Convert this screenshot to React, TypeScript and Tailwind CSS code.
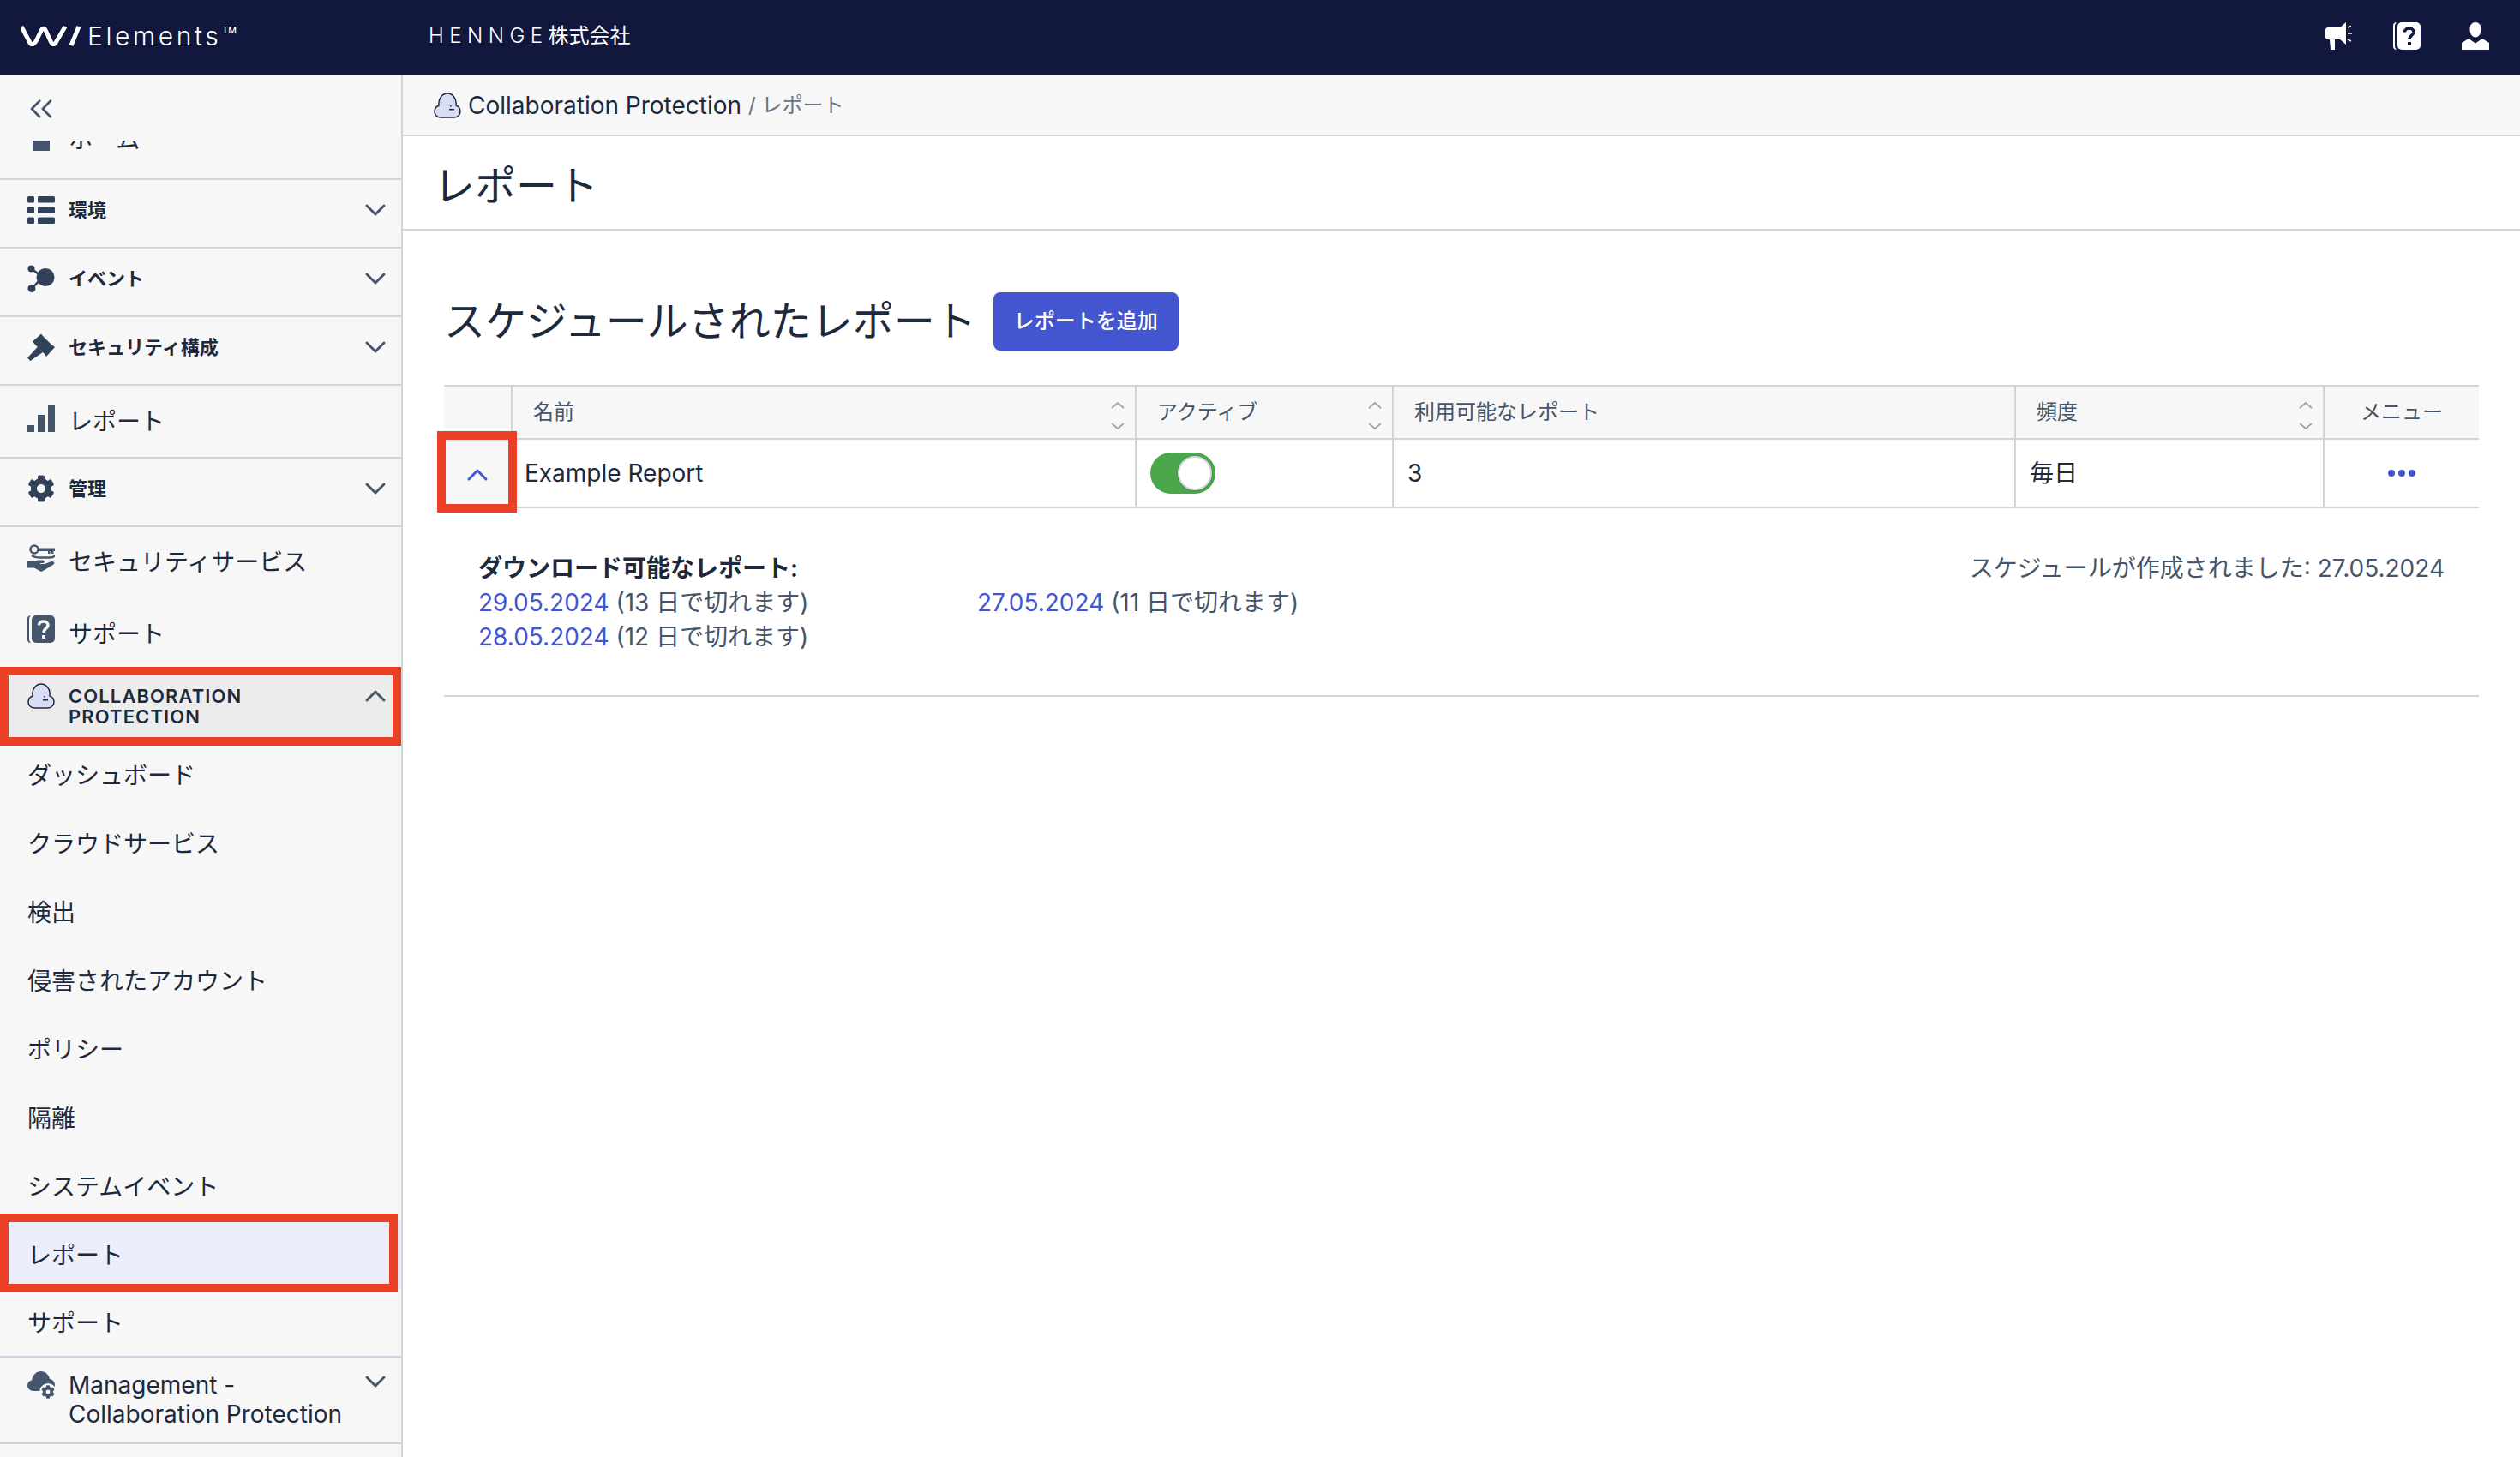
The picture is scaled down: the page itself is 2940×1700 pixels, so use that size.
import { ChevronDown, ChevronUp, ChevronsLeft } from "lucide-react";
import { FC, ReactNode } from "react";
import { FaCog } from "react-icons/fa";

const ListIcon: FC = () => (
  <svg viewBox="0 0 32 32" className="w-8 h-8 shrink-0 fill-current">
    <rect x="0" y="0" width="8" height="7.5" rx="1.5" />
    <rect x="12" y="0" width="20" height="7.5" rx="1.5" />
    <rect x="0" y="12" width="8" height="8" rx="1.5" />
    <rect x="12" y="12" width="20" height="8" rx="1.5" />
    <rect x="0" y="24.5" width="8" height="7.5" rx="1.5" />
    <rect x="12" y="24.5" width="20" height="7.5" rx="1.5" />
  </svg>
);

const EventIcon: FC = () => (
  <svg viewBox="0 0 32 32" className="w-8 h-8 shrink-0 fill-current">
    <circle cx="21" cy="14.5" r="10.5" />
    <circle cx="4.5" cy="4.5" r="4" />
    <circle cx="5" cy="27.5" r="4.5" />
    <path d="M4.5 4.5 L18 14.5 L5 27.5" fill="none" stroke="currentColor" strokeWidth="2.5" />
  </svg>
);

const GavelIcon: FC = () => (
  <svg viewBox="0 0 32 32" className="w-8 h-8 shrink-0 fill-current">
    <path d="M16 0.5 L18 3 L28 13 L32 16 L22 27 L19.5 23.5 L9 13 L6 9.5 Z" />
    <path d="M12 15.5 L18 22 L3.5 32 L0 28.5 Z" />
  </svg>
);

const BarsIcon: FC = () => (
  <svg viewBox="0 0 32 32" className="w-8 h-8 shrink-0 mb-2 fill-current">
    <rect x="0" y="24" width="8" height="8" />
    <rect x="12" y="12" width="8" height="20" />
    <rect x="24" y="0" width="8" height="32" />
  </svg>
);

const KeyHandIcon: FC = () => (
  <svg viewBox="0 0 32 32" className="w-8 h-8 shrink-0 mb-2 fill-current">
    <circle cx="8" cy="6" r="4.5" fill="none" stroke="currentColor" strokeWidth="2.5" />
    <path d="M12 4.5 H32 V8 H30.5 V11 H28 V8 H26.5 V11 H24 V8 H12 Z" />
    <path d="M5 13 C9 16 13 15.5 17 15.5 H26 C29 15.5 31 15 32 13" fill="none" stroke="currentColor" strokeWidth="2.5" />
    <path d="M0 20 H7 L12 18.5 H18 C20.5 18.5 20.5 22 18 22 H15 V23 H20 L28 20 C31 19.5 32.5 22 30.5 23.5 L20 30 L16 32 L8 27.5 H0 Z" />
  </svg>
);

const HelpIcon: FC<{ cut: string; className?: string }> = ({ cut, className = "mb-2" }) => (
  <svg viewBox="0 0 32 32" className={`w-8 h-8 shrink-0 fill-current ${className}`}>
    <path d="M4 0 C1 0 0 2 0 4 V28 C0 30 1 32 4 32 C2.5 31 2 29 2 27 V5 C2 3 2.5 1 4 0 Z" />
    <rect x="5" y="0" width="27" height="32" rx="5" />
    <path d="M13.5 11.5 C13.5 5.5 24 5.5 24 11.5 C24 15.5 19 15 19 20" fill="none" stroke={cut} strokeWidth="3.5" />
    <rect x="17" y="23" width="4" height="4" fill={cut} />
  </svg>
);

const CloudFaceIcon: FC = () => (
  <svg viewBox="0 0 32 30" className="w-8 h-8 shrink-0">
    <path
      d="M8 29 C3 29 1 25 1 22 C1 18 3.5 16 6 15 C5 7 10 1 16 1 C22 1 27 7 26 15 C28.5 16 31 18 31 22 C31 25 28.5 29 24 29 Z"
      fill="#d9dcf5"
      stroke="#1e293b"
      strokeWidth="1.5"
    />
    <rect x="19" y="15" width="1.5" height="1.5" fill="#1e293b" />
    <rect x="18" y="19" width="6" height="1.5" fill="#1e293b" />
  </svg>
);

const ManagementIcon: FC = () => (
  <div className="relative w-8 h-8 shrink-0">
    <svg viewBox="0 0 32 32" className="w-8 h-8 fill-current">
      <path d="M7 23 C3 23 0 20 0 16.5 C0 13.5 2 11 5 10.5 C6 5 10 0 16 0 C21 0 25 4 26 9 C29.5 9.5 32 12.5 32 16 C32 20 29 23 25 23 Z" />
    </svg>
    <div className="absolute -right-0.5 -bottom-0.5 p-0.5 rounded-full bg-[#f7f7f7]">
      <FaCog className="w-4 h-4" />
    </div>
  </div>
);

const MegaphoneIcon: FC = () => (
  <svg viewBox="0 0 32 32" className="w-8 h-8 fill-current">
    <path d="M4 6 H18 L25 0 V26 L18 20 H12 V32 H7 L6 20 H4 C1.5 20 0 17 0 13 C0 9 1.5 6 4 6 Z" />
    <path d="M27 6 L31 4.5 M27 13 H32 M27 20 L31 22" fill="none" stroke="currentColor" strokeWidth="1.5" />
  </svg>
);

const UserIcon: FC = () => (
  <svg viewBox="0 0 32 32" className="w-8 h-8 fill-current">
    <path d="M16 0 C20 0 22.5 3 22.5 8 C22.5 13 20 17.5 16 17.5 C12 17.5 9.5 13 9.5 8 C9.5 3 12 0 16 0 Z" />
    <path d="M0 24 L8 19 L16 24.5 L24 19 L32 24 V32 H0 Z" />
  </svg>
);

const SortIcon: FC = () => (
  <svg viewBox="0 0 16 32" className="w-4 h-8 mt-2 shrink-0 fill-none stroke-gray-400" strokeWidth="1.75">
    <path d="M1 7 L8 1 L15 7" />
    <path d="M1 25 L8 31 L15 25" />
  </svg>
);

const Section: FC<{ icon: ReactNode; label: string }> = ({ icon, label }) => (
  <div className="flex items-center h-20 pb-2 pl-8 pr-2.5 gap-4 border-b-2 border-zinc-300">
    <div className="text-slate-700">{icon}</div>
    <span className="text-[22px] font-semibold">{label}</span>
    <ChevronDown className="w-10 h-10 ml-auto text-slate-600" strokeWidth={1.75} />
  </div>
);

const subItems = ["ダッシュボード", "クラウドサービス", "検出", "侵害されたアカウント", "ポリシー", "隔離", "システムイベント"];

const Sidebar: FC = () => (
  <aside className="w-[470px] shrink-0 flex flex-col bg-[#f7f7f7] border-r-2 border-zinc-300 text-slate-800 text-[28px]">
    <div className="h-19 flex items-center pt-0.5 pl-6.5 text-slate-600">
      <ChevronsLeft className="w-11 h-11" strokeWidth={1.5} />
    </div>
    <div className="h-11 flex flex-col justify-end overflow-hidden border-b-2 border-zinc-300 box-content -mb-0.5">
      <div className="flex items-center shrink-0 h-20 pb-2.5 pl-8 gap-4">
        <div className="w-8 h-8 shrink-0 flex items-end pl-1.5 -mt-1.5">
          <div className="w-5 h-4 bg-slate-600" />
        </div>
        <span>ホーム</span>
      </div>
    </div>
    <div className="h-0.5" />
    <Section icon={<ListIcon />} label="環境" />
    <Section icon={<EventIcon />} label="イベント" />
    <Section icon={<GavelIcon />} label="セキュリティ構成" />
    <div className="flex items-center h-21.25 pl-8 gap-4 border-b-2 border-zinc-300">
      <div className="text-slate-600"><BarsIcon /></div>
      <span>レポート</span>
    </div>
    <Section icon={<FaCog className="w-8 h-8" />} label="管理" />
    <div className="flex items-center h-20 pl-8 gap-4">
      <div className="text-slate-600"><KeyHandIcon /></div>
      <span className="mt-0.5">セキュリティサービス</span>
    </div>
    <div className="flex items-center h-21.25 pl-8 gap-4">
      <div className="text-slate-600"><HelpIcon cut="#f7f7f7" /></div>
      <span className="mt-1">サポート</span>
    </div>
    <div className="relative flex items-start h-21 pt-4 pl-8 pr-2.5 gap-4 bg-neutral-200/60">
      <CloudFaceIcon />
      <span className="text-[22px] leading-6 font-semibold tracking-wider mt-1 uppercase">
        Collaboration<br />Protection
      </span>
      <ChevronUp className="w-10 h-10 ml-auto -mt-1 text-slate-600" strokeWidth={1.75} />
      <div className="absolute inset-x-0 -top-0.5 -bottom-1.5 z-10 border-10 border-[#ea4025]" />
    </div>
    {subItems.map(item => (
      <div key={item} className="flex items-center shrink-0 h-20 pt-0.5 pl-8">{item}</div>
    ))}
    <div className="relative flex items-center shrink-0 h-20 pt-0.5 pl-8 bg-[#eceefb]">
      レポート
      <div className="absolute left-0 right-1 -top-2 -bottom-1 border-10 border-[#ea4025]" />
    </div>
    <div className="flex items-center shrink-0 h-20 pt-0.5 pl-8 border-b-2 border-slate-300">サポート</div>
    <div className="flex items-start pt-4 pb-4 pl-8 pr-2.5 gap-4 border-b-2 border-zinc-300">
      <div className="text-slate-600"><ManagementIcon /></div>
      <span className="leading-8.5 -mt-px">Management -<br />Collaboration Protection</span>
      <ChevronDown className="w-10 h-10 ml-auto -mt-2 text-slate-600" strokeWidth={1.75} />
    </div>
  </aside>
);

const columns = "grid grid-cols-[80px_728px_300px_726px_360px_1fr]";

const HeaderCell: FC<{ label: string; sort?: boolean }> = ({ label, sort }) => (
  <div className="flex items-center justify-between pl-6 pr-3 border-r-2 border-zinc-300">
    <span>{label}</span>
    {sort && <SortIcon />}
  </div>
);

const ReportLink: FC<{ date: string; days: number }> = ({ date, days }) => (
  <div>
    <a className="text-[#4355cf]">{date}</a> ({days} 日で切れます)
  </div>
);

export default function App() {
  return (
    <div className="h-screen flex flex-col overflow-hidden bg-white font-[Inter,'Noto_Sans_CJK_JP',sans-serif]">
      <header className="h-22 shrink-0 flex items-center pb-1 pl-6 pr-9 bg-[#12173d] text-white">
        <svg viewBox="0 0 70 24" className="w-17.5 h-6 fill-none stroke-white" strokeWidth="5">
          <path d="M1 1 L10 18 C12 23 15 23 18 18 L23.5 7 C25.5 2 28 2 30 7 L35 18 C37 23 40 23 42 18 L52 1" strokeLinejoin="round" />
          <path d="M68 1 L59 23" />
        </svg>
        <span className="ml-2 w-[398px] text-3xl font-light tracking-[0.12em]">Elements™</span>
        <span className="text-2xl">
          <span className="tracking-[0.27em] font-light">HENNGE</span>株式会社
        </span>
        <div className="ml-auto flex items-center gap-12">
          <MegaphoneIcon />
          <HelpIcon cut="#12173d" className="" />
          <UserIcon />
        </div>
      </header>

      <div className="flex-1 flex min-h-0">
        <Sidebar />
        <main className="flex-1 min-w-0 text-slate-800">
          <div className="h-17.75 flex items-center pl-9 gap-2 bg-[#f7f7f7] border-b-2 border-zinc-300 text-[28px]">
            <CloudFaceIcon />
            <span>Collaboration Protection</span>
            <span className="text-2xl text-gray-500">/&nbsp;レポート</span>
          </div>
          <div className="h-27.5 flex items-center pt-2 pl-9 border-b-2 border-zinc-300 text-5xl">レポート</div>

          <div className="pt-18 px-12">
            <div className="flex items-center gap-5">
              <h2 className="text-5xl">スケジュールされたレポート</h2>
              <button className="h-17 px-6 rounded-lg bg-[#4355cf] text-white text-2xl font-medium">レポートを追加</button>
            </div>

            <div className="mt-10 text-[28px] leading-10 border-t-2 border-zinc-300">
              <div className={`${columns} h-[62px] bg-[#f7f7f7] border-b-2 border-zinc-300 text-2xl text-slate-600`}>
                <div className="border-r-2 border-zinc-300" />
                <HeaderCell label="名前" sort />
                <HeaderCell label="アクティブ" sort />
                <HeaderCell label="利用可能なレポート" />
                <HeaderCell label="頻度" sort />
                <div className="flex items-center justify-center">メニュー</div>
              </div>
              <div className={`${columns} relative h-20 border-b-2 border-zinc-300`}>
                <div className="flex items-center justify-center bg-[#f7f7f7] border-r-2 border-zinc-300">
                  <ChevronUp className="w-10 h-10 mt-1 text-[#4355cf]" strokeWidth={1.75} />
                </div>
                <div className="flex items-center pl-3.5 border-r-2 border-zinc-300">Example Report</div>
                <div className="flex items-center pl-4 border-r-2 border-zinc-300">
                  <div className="w-19 h-12 flex items-center justify-end pr-1 rounded-full bg-[#4ca64c]">
                    <div className="w-10 h-10 rounded-full bg-white border-2 border-gray-300 shadow" />
                  </div>
                </div>
                <div className="flex items-center pl-4 border-r-2 border-zinc-300">3</div>
                <div className="flex items-center pl-4 border-r-2 border-zinc-300">毎日</div>
                <div className="flex items-center justify-center gap-1">
                  <div className="w-2 h-2 rounded-full bg-[#4355cf]" />
                  <div className="w-2 h-2 rounded-full bg-[#4355cf]" />
                  <div className="w-2 h-2 rounded-full bg-[#4355cf]" />
                </div>
                <div className="absolute -left-2 -top-2.5 w-[93px] h-[95px] border-10 border-[#ea4025]" />
              </div>

              <div className="flex justify-between pt-12.5 pb-12 pl-10 pr-10 border-b-2 border-zinc-300 text-slate-600">
                <div>
                  <div className="font-semibold text-slate-800">ダウンロード可能なレポート:</div>
                  <div className="grid grid-cols-[582px_1fr]">
                    <ReportLink date="29.05.2024" days={13} />
                    <ReportLink date="27.05.2024" days={11} />
                    <ReportLink date="28.05.2024" days={12} />
                  </div>
                </div>
                <div>スケジュールが作成されました: 27.05.2024</div>
              </div>
            </div>
          </div>
        </main>
      </div>
    </div>
  );
}
